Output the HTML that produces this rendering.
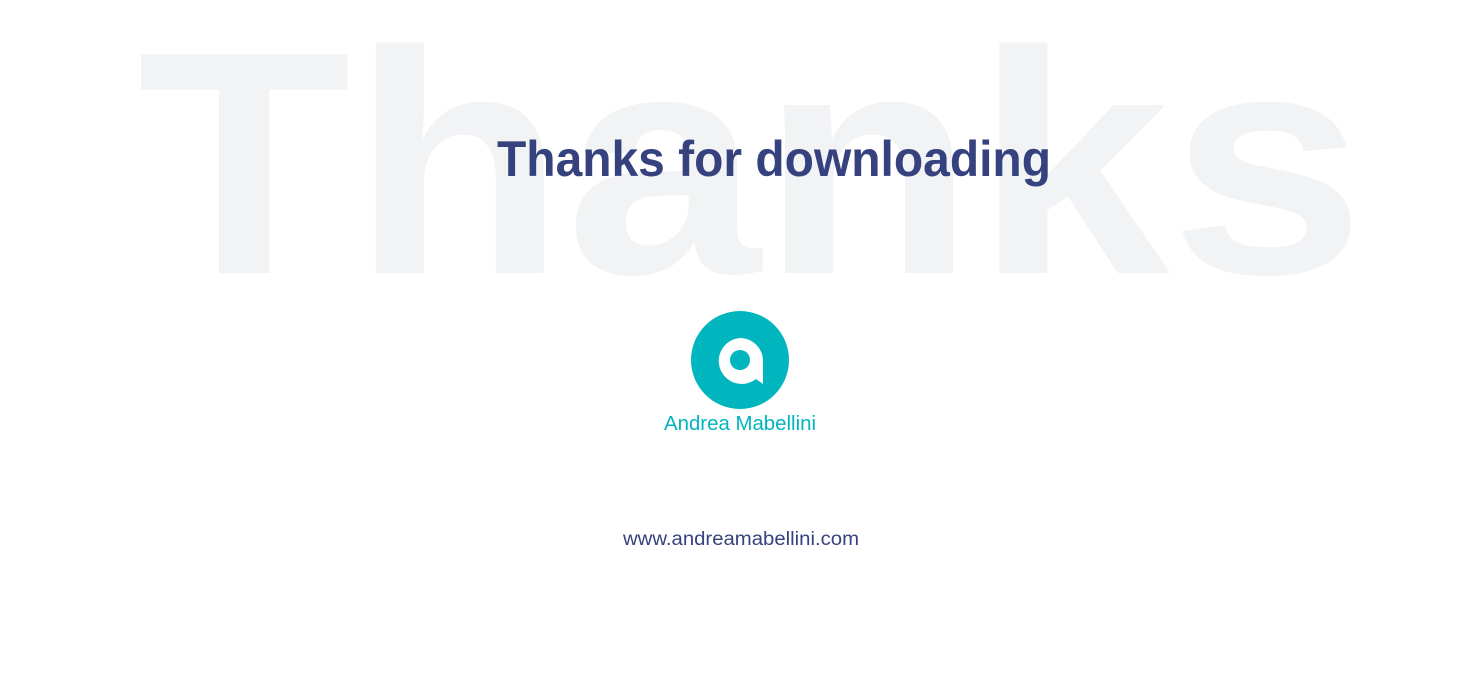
<!DOCTYPE html>
<html><head><style>
html,body{margin:0;padding:0;background:#fff;width:1480px;height:688px;overflow:hidden}
</style></head><body>
<svg width="1480" height="688" viewBox="0 0 1480 688" xmlns="http://www.w3.org/2000/svg">
<text x="137" y="273" font-family="Liberation Sans, sans-serif" font-weight="bold" font-size="318" fill="#f2f3f5" textLength="1228" lengthAdjust="spacingAndGlyphs">Thanks</text>
<text x="497" y="176" font-family="Liberation Sans, sans-serif" font-weight="bold" font-size="50" fill="#36427e" textLength="554" lengthAdjust="spacingAndGlyphs">Thanks for downloading</text>
<circle cx="740" cy="360" r="49" fill="#00b5bd"/>
<path d="M740 338 A23 23 0 0 1 763 361 L763 384 L756 379 A23 23 0 1 1 740 338 Z" fill="#fff"/>
<circle cx="740" cy="360" r="10" fill="#00b5bd"/>
<text x="740" y="430" text-anchor="middle" font-family="Liberation Sans, sans-serif" font-size="20" fill="#00b5bd" textLength="152" lengthAdjust="spacingAndGlyphs">Andrea Mabellini</text>
<text x="741" y="545" text-anchor="middle" font-family="Liberation Sans, sans-serif" font-size="19" fill="#36427e" textLength="236" lengthAdjust="spacingAndGlyphs">www.andreamabellini.com</text>
</svg>
</body></html>
